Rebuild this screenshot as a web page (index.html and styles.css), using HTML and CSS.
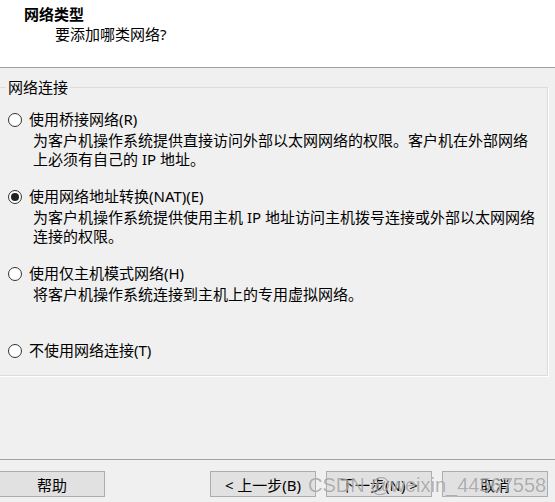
FILE: index.html
```html
<!DOCTYPE html>
<html lang="zh-CN">
<head>
    <meta charset="UTF-8">
    <meta name="viewport" content="width=device-width, initial-scale=1.0">
    <title>网络类型</title>
    <link rel="stylesheet" href="styles.css">
</head>
<body>
    <div class="header">
        <div class="title">网络类型</div>
        <div class="subtitle">要添加哪类网络?</div>
    </div>

    <fieldset class="group">
        <legend>网络连接</legend>

        <div class="option">
            <div class="option-label"><span class="radio"></span>使用桥接网络(R)</div>
            <div class="desc">为客户机操作系统提供直接访问外部以太网网络的权限。客户机在外部网络<br>上必须有自己的 IP 地址。</div>
        </div>

        <div class="option">
            <div class="option-label"><span class="radio checked"></span>使用网络地址转换(NAT)(E)</div>
            <div class="desc">为客户机操作系统提供使用主机 IP 地址访问主机拨号连接或外部以太网网络<br>连接的权限。</div>
        </div>

        <div class="option">
            <div class="option-label"><span class="radio"></span>使用仅主机模式网络(H)</div>
            <div class="desc">将客户机操作系统连接到主机上的专用虚拟网络。</div>
        </div>

        <div class="option last">
            <div class="option-label"><span class="radio"></span>不使用网络连接(T)</div>
        </div>
    </fieldset>

    <div class="footer">
        <button class="btn help">帮助</button>
        <button class="btn prev">&lt; 上一步(B)</button>
        <button class="btn">下一步(N) &gt;</button>
        <button class="btn">取消</button>
        <span class="watermark">CSDN @weixin_44567558</span>
    </div>
</body>
</html>
```

FILE: styles.css
```css
html, body {
    height: 100%;
}

body {
    margin: 0;
    background-color: #f0f0f0;
    color: #000;
    font-family: "Noto Sans", "Noto Sans CJK SC", sans-serif;
    font-size: 15px;
    line-height: 19px;
    display: flex;
    flex-direction: column;
    overflow: hidden;
}

.header {
    background-color: #fff;
    height: 62px;
    padding-top: 5px;
    border-bottom: 1px solid #a0a0a0;
}

.title {
    font-weight: bold;
    padding-left: 24px;
}

.subtitle {
    margin-top: 1px;
    padding-left: 55px;
}

.group {
    margin: 10px 7px 0 -2px;
    padding: 13px 0 15px 7px;
    border: 1px solid #dcdcdc;
    box-shadow: 1px 1px 0 #fff;
    min-width: 0;
}

.group legend {
    padding: 0 2px;
    line-height: 19px;
}

.option {
    padding-left: 2px;
    margin-bottom: 18px;
}

.option.last {
    margin-bottom: 0;
}

.option-label {
    display: flex;
    align-items: center;
    white-space: nowrap;
}

.radio {
    flex: none;
    box-sizing: border-box;
    width: 14px;
    height: 14px;
    border: 1px solid #333;
    border-radius: 50%;
    background-color: #fff;
    margin-right: 7px;
    position: relative;
}

.radio.checked::after {
    content: "";
    position: absolute;
    left: 2px;
    top: 2px;
    width: 8px;
    height: 8px;
    border-radius: 50%;
    background-color: #222;
}

.desc {
    margin-top: 2px;
    padding-left: 25px;
    min-height: 38px;
    white-space: nowrap;
}

.footer {
    margin-top: auto;
    border-top: 1px solid #a0a0a0;
    padding: 11px 7px 5px 0;
    display: flex;
    gap: 10px;
    position: relative;
}

.btn {
    width: 106px;
    height: 26px;
    padding: 0;
    background-color: #e1e1e1;
    border: 1px solid #adadad;
    font-family: "Noto Sans", "Noto Sans CJK SC", sans-serif;
    font-size: 15px;
    color: #000;
}

.btn.help {
    margin-left: -1px;
    margin-right: auto;
}

.watermark {
    position: absolute;
    left: 308px;
    top: 13px;
    font-family: "Liberation Sans", Arial, sans-serif;
    font-size: 20px;
    line-height: 24px;
    color: rgba(110, 110, 110, 0.55);
    text-shadow: 0 0 1px rgba(255, 255, 255, 0.8);
    white-space: nowrap;
}
```
